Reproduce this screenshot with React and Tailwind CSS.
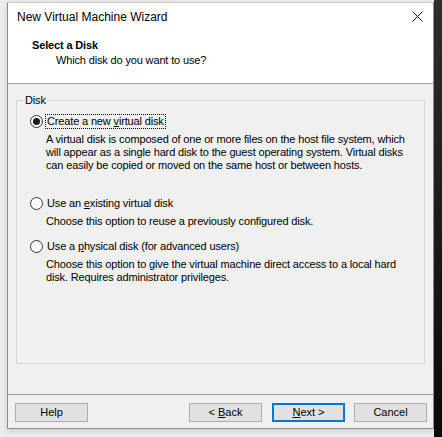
import React from "react";

const font = { fontFamily: '"Liberation Sans", Arial, sans-serif' };

const Radio = ({ checked }) => (
  <span className="w-[13px] h-[13px] rounded-full border border-[#333] bg-white flex items-center justify-center shrink-0">
    {checked && <span className="w-[7px] h-[7px] rounded-full bg-[#1a1a1a]" />}
  </span>
);

const Option = ({ checked, label, desc, focus }) => (
  <div className="flex flex-col">
    <div className="flex items-center gap-[2px] pl-[13px] h-[15px]">
      <Radio checked={checked} />
      <span
        className={
          "px-[1px] leading-[13px] border " +
          (focus ? "border-dotted border-black" : "border-transparent")
        }
      >
        {label}
      </span>
    </div>
    <div className="pl-[29px] pr-[8px] mt-[4px] leading-[13px]">{desc}</div>
  </div>
);

const Button = ({ children, primary, className = "" }) => (
  <button
    className={
      "h-[19px] w-[73px] bg-[#e1e1e1] text-[11px] leading-none text-black tracking-normal " +
      (primary ? "border-2 border-[#0078d7]" : "border border-[#adadad]") +
      " " +
      className
    }
  >
    {children}
  </button>
);

export default function App() {
  return (
    <div
      className="w-[442px] h-[437px] bg-[#ededed] flex overflow-hidden text-[11px] tracking-[-0.15px] text-black"
      style={font}
    >
      <div className="w-[7px] shrink-0" />
      <div className="w-[427px] shrink-0 mt-[2px] h-[427px] flex flex-col bg-[#f0f0f0] border border-[#8c8c8c] border-t-[#c8c8c8] shadow-[0_2px_6px_rgba(0,0,0,0.15)]">
        <div className="h-[27px] bg-white flex items-center justify-between pl-[9px] pr-[9px]">
          <span className="text-[12px] tracking-normal">New Virtual Machine Wizard</span>
          <svg width="11" height="11" viewBox="0 0 11 11" className="mr-[1px]">
            <path d="M0.5 0.5 L10.5 10.5 M10.5 0.5 L0.5 10.5" stroke="#111" strokeWidth="1" />
          </svg>
        </div>
        <div className="h-[54px] bg-white border-b border-[#a0a0a0] flex flex-col pt-[8px]">
          <div className="pl-[24px] font-bold leading-[14px]">Select a Disk</div>
          <div className="pl-[48px] leading-[14px] mt-[1px]">Which disk do you want to use?</div>
        </div>
        <div className="flex-1 px-[8px] pt-[10px]">
          <fieldset className="border border-[#d5d5d5] h-[270px] pb-0">
            <legend className="ml-[7px] px-[1px] leading-[13px]">Disk</legend>
            <div className="flex flex-col mt-[7px]">
              <Option
                checked
                focus
                label={
                  <>
                    Create a new <u>v</u>irtual disk
                  </>
                }
                desc="A virtual disk is composed of one or more files on the host file system, which will appear as a single hard disk to the guest operating system. Virtual disks can easily be copied or moved on the same host or between hosts."
              />
              <div className="mt-[24px]">
                <Option
                  label={
                    <>
                      Use an <u>e</u>xisting virtual disk
                    </>
                  }
                  desc="Choose this option to reuse a previously configured disk."
                />
              </div>
              <div className="mt-[11px]">
                <Option
                  label={
                    <>
                      Use a <u>p</u>hysical disk (for advanced users)
                    </>
                  }
                  desc="Choose this option to give the virtual machine direct access to a local hard disk. Requires administrator privileges."
                />
              </div>
            </div>
          </fieldset>
        </div>
        <div className="border-t border-[#a0a0a0] h-[34px] flex items-start pt-[8px] pl-[7px] pr-[6px]">
          <Button>Help</Button>
          <div className="flex-1" />
          <Button className="w-[72px]">
            &lt; <u>B</u>ack
          </Button>
          <Button primary className="ml-[10px] w-[71px]">
            <u>N</u>ext &gt;
          </Button>
          <Button className="ml-[9px]">Cancel</Button>
        </div>
      </div>
      <div className="w-[8px] shrink-0 h-full bg-gradient-to-b from-[#2e2e2e] to-[#0a0a0a]" />
    </div>
  );
}
